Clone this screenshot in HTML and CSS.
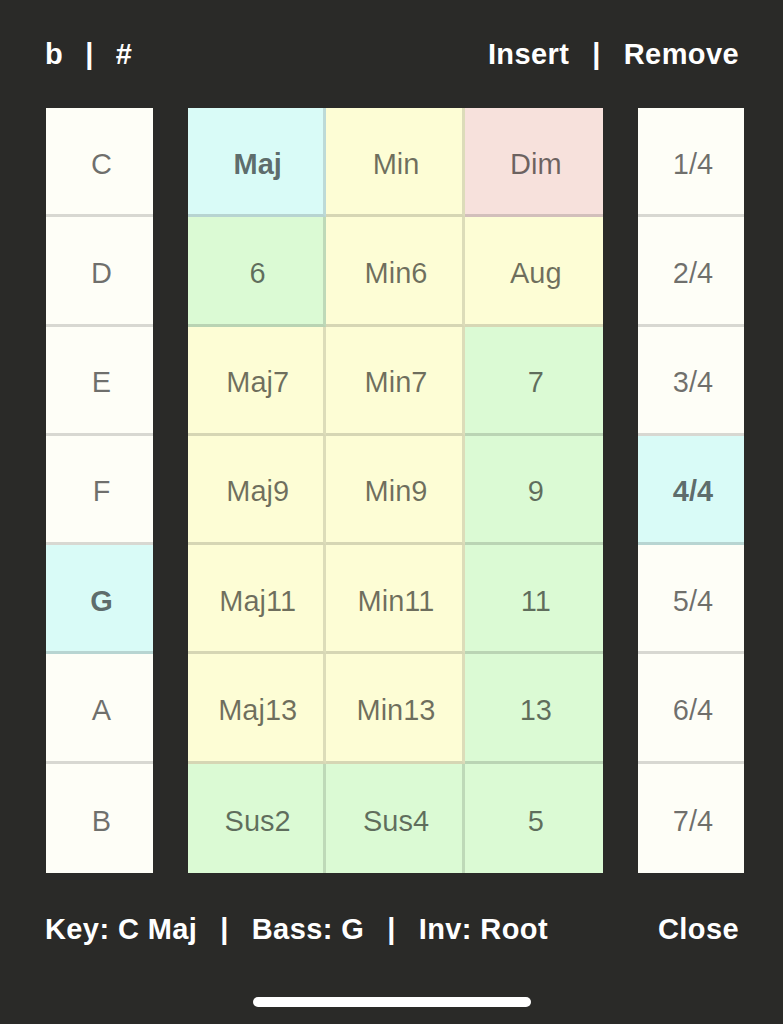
FILE: index.html
```html
<!DOCTYPE html>
<html>
<head>
<meta charset="utf-8">
<link rel="stylesheet" href="styles.css">
</head>
<body>
<div class="screen">
  <header class="bar top">
    <div class="group">
      <span>b</span><span class="sep">|</span><span>#</span>
    </div>
    <div class="group">
      <span>Insert</span><span class="sep">|</span><span>Remove</span>
    </div>
  </header>

  <main class="board">
    <div class="col">
      <div class="cell white">C</div>
      <div class="cell white">D</div>
      <div class="cell white">E</div>
      <div class="cell white">F</div>
      <div class="cell cyan sel">G</div>
      <div class="cell white">A</div>
      <div class="cell white last">B</div>
    </div>

    <div class="chords">
      <div class="cell cyan sel">Maj</div>
      <div class="cell yellow">Min</div>
      <div class="cell pink end">Dim</div>

      <div class="cell green">6</div>
      <div class="cell yellow">Min6</div>
      <div class="cell yellow end">Aug</div>

      <div class="cell yellow">Maj7</div>
      <div class="cell yellow">Min7</div>
      <div class="cell green end">7</div>

      <div class="cell yellow">Maj9</div>
      <div class="cell yellow">Min9</div>
      <div class="cell green end">9</div>

      <div class="cell yellow">Maj11</div>
      <div class="cell yellow">Min11</div>
      <div class="cell green end">11</div>

      <div class="cell yellow">Maj13</div>
      <div class="cell yellow">Min13</div>
      <div class="cell green end">13</div>

      <div class="cell green last">Sus2</div>
      <div class="cell green last">Sus4</div>
      <div class="cell green last end">5</div>
    </div>

    <div class="col">
      <div class="cell white">1/4</div>
      <div class="cell white">2/4</div>
      <div class="cell white">3/4</div>
      <div class="cell cyan sel">4/4</div>
      <div class="cell white">5/4</div>
      <div class="cell white">6/4</div>
      <div class="cell white last">7/4</div>
    </div>
  </main>

  <footer class="bar bottom">
    <div class="group">
      <span>Key: C Maj</span><span class="sep">|</span><span>Bass: G</span><span class="sep">|</span><span>Inv: Root</span>
    </div>
    <div class="group">
      <span>Close</span>
    </div>
  </footer>

  <div class="home"><div class="indicator"></div></div>
</div>
</body>
</html>
```

FILE: styles.css
```css
html, body {
  margin: 0;
  padding: 0;
  background: #2a2a28;
}

.screen {
  width: 783px;
  height: 1024px;
  display: flex;
  flex-direction: column;
  font-family: "Liberation Sans", Arial, sans-serif;
  overflow: hidden;
}

.bar {
  display: flex;
  justify-content: space-between;
  align-items: center;
  padding: 0 44px 0 45px;
  color: #ffffff;
  font-weight: bold;
  font-size: 29px;
  letter-spacing: 0.4px;
}

.top {
  height: 108px;
}

.bottom {
  height: 112px;
}

.group {
  display: flex;
  align-items: center;
  gap: 23px;
}

.top .group:first-child {
  gap: 22px;
}

.sep {
  font-weight: bold;
}

.board {
  display: grid;
  grid-template-columns: 107px 1fr 106px;
  column-gap: 35px;
  padding: 0 39px 0 46px;
  height: 765px;
}

.col {
  display: grid;
  grid-template-rows: repeat(7, 1fr);
}

.chords {
  display: grid;
  grid-template-columns: repeat(3, 1fr);
  grid-template-rows: repeat(7, 1fr);
}

.cell {
  display: flex;
  align-items: center;
  justify-content: center;
  font-size: 29px;
  color: rgba(0, 0, 0, 0.56);
  border-bottom: 3px solid rgba(0, 0, 0, 0.15);
  padding: 6px 0 0 4px;
  min-width: 0;
  min-height: 0;
}

.chords .cell {
  border-right: 3px solid rgba(0, 0, 0, 0.13);
}

.chords .cell.end {
  border-right: none;
}

.cell.last {
  border-bottom: none;
}

.sel {
  font-weight: bold;
  color: rgba(0, 0, 0, 0.58);
}

.white { background: #fefef7; }
.cyan { background: #d9fbf7; }
.yellow { background: #fdfdd5; }
.green { background: #dbfad4; }
.pink { background: #f7e1dc; }

.home {
  display: flex;
  justify-content: center;
  padding-top: 12px;
}

.indicator {
  width: 278px;
  height: 10px;
  border-radius: 5px;
  background: #ffffff;
}
```
